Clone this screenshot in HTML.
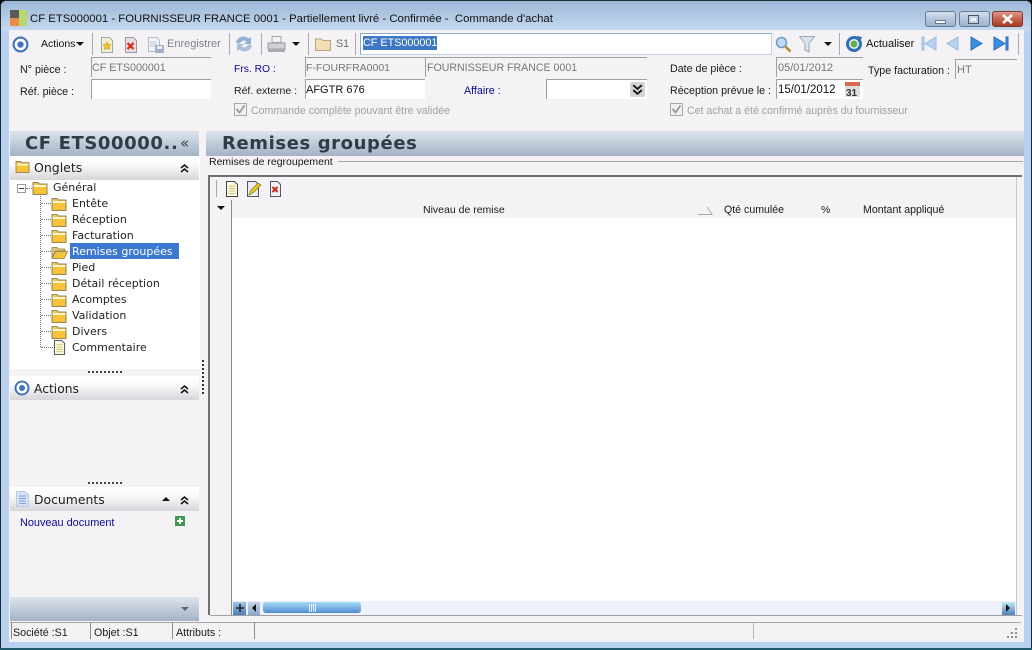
<!DOCTYPE html>
<html><head><meta charset="utf-8"><title>CF ETS000001</title>
<style>
html,body{margin:0;padding:0;width:1032px;height:650px;overflow:hidden;background:#000}
div,svg{position:absolute}
.t{font:10.7px/14px "Liberation Sans",sans-serif;color:#1a1a1a;white-space:nowrap;margin-top:1px}
.g{color:#8c8c8c}.b{color:#0a0a96}
.v{font:12px/14px "Liberation Sans",sans-serif;color:#111;white-space:nowrap;margin-top:1px}
.f{border-top:1px solid #a0a0a0;border-left:1px solid #a0a0a0;box-sizing:border-box;background:#fff;height:20px}
.d{background:#f5f2f6}
.n{font:11px/16px "DejaVu Sans",sans-serif;color:#222;white-space:nowrap;margin-top:1px}
.sep{width:1px;height:22px;background:#a9a9ad;top:33px}
.hp{background:linear-gradient(#fff 0,#fbfbfc 35%,#d6d6da 100%);left:10px;width:189px;height:24px}
.hb{background:linear-gradient(#dce4ee,#a4b2c4)}
.wb{top:11px;width:31px;height:16px;border:1px solid #6a7a90;box-sizing:border-box;border-radius:3px;background:linear-gradient(#d4deea,#b4c5da 50%,#9db2cc)}
</style></head><body>
<svg width="0" height="0" style="left:0;top:0"><defs>
<symbol id="fo" viewBox="0 0 16 14"><path d="M1 1.500h5l1.500 1.500H15v10.500H1z" fill="#e8c45a" stroke="#7a6a3a" stroke-width=".8"/><path d="M1.500 4h13v2H1.500z" fill="#fff6cc"/><path d="M1.500 6h13v7h-13z" fill="#f6c436"/></symbol>
<symbol id="doc" viewBox="0 0 14 16"><path d="M1.500.5h8l3 3v12h-11z" fill="#fdfbe6" stroke="#444" stroke-width="1"/><path d="M3.500 5h7M3.500 7.500h7M3.500 10h7M3.500 12.500h7" stroke="#c7bf74"/></symbol>
<symbol id="up2" viewBox="0 0 9 9"><path d="M1 4l3.500-3L8 4M1 8l3.500-3L8 8" fill="none" stroke="#111" stroke-width="1.500"/></symbol>
<symbol id="tg" viewBox="0 0 16 16"><circle cx="8" cy="8" r="6.500" fill="#fff" stroke="#3f74bd" stroke-width="2"/><circle cx="8" cy="8" r="3" fill="#3f74bd"/></symbol>
</defs></svg>

<!-- window frame -->
<div style="left:0;top:0;width:1032px;height:650px;background:#b9d2ef;border-radius:6px 6px 0 0;border:1px solid #1b2a35;box-sizing:border-box"></div>
<div style="left:1px;top:1px;width:1030px;height:30px;background:linear-gradient(#9db8d6,#c6d9f0);border-radius:5px 5px 0 0"></div>
<div style="left:0;top:648px;width:1032px;height:2px;background:#1f5a6e"></div>
<div style="left:9px;top:30px;width:1015px;height:612px;background:#f5f2f6"></div>

<!-- title -->
<div style="left:10px;top:10px;width:9px;height:8px;background:#5a5a5a"></div>
<div style="left:19px;top:10px;width:8px;height:16px;background:#b3d96b"></div>
<div style="left:10px;top:18px;width:9px;height:8px;background:#ef8a45"></div>
<div class="t" style="left:30px;top:11px;font-size:11.35px;color:#111">CF ETS000001 - FOURNISSEUR FRANCE 0001 - Partiellement livré - Confirmée -&nbsp; Commande d'achat</div>
<!-- window buttons -->
<div class="wb" style="left:925px"></div>
<div style="left:935px;top:20px;width:11px;height:4px;background:#f2f5f9;border:1px solid #6a7890;box-sizing:border-box"></div>
<div class="wb" style="left:959px"></div>
<div style="left:968px;top:15px;width:11px;height:9px;background:#c4d0df;border:1px solid #48566b;box-sizing:border-box"></div>
<div style="left:971px;top:18px;width:5px;height:3px;background:#eef2f7"></div>
<div style="left:992px;top:11px;width:31px;height:16px;border:1px solid #7a3a30;box-sizing:border-box;border-radius:3px;background:linear-gradient(#dd9a8c,#c9614e 50%,#a83a24)"></div>
<svg style="left:1001px;top:14px" width="13" height="10"><path d="M2 1l9 8M11 1l-9 8" stroke="#fff" stroke-width="2.600"/></svg>

<!-- toolbar -->
<svg style="left:12px;top:36px" width="17" height="17"><use href="#tg"/></svg>
<div class="t" style="left:41px;top:36px;color:#111;font-size:10.500px">Actions</div>
<svg style="left:76px;top:42px" width="9" height="5"><path d="M0 0h8L4 4z" fill="#111"/></svg>
<div class="sep" style="left:92px"></div>
<svg style="left:100px;top:37px" width="14" height="16"><path d="M1.500.5h8l3 3v12h-11z" fill="#f5eecc" stroke="#9aa" /><path d="M7 5l1.300 2.600 2.700.3-2 2 .6 2.800L7 11.300 4.400 12.700 5 9.900l-2-2 2.700-.3z" fill="#ecc52c" stroke="#b08a10" stroke-width=".5"/></svg>
<svg style="left:124px;top:37px" width="14" height="16"><path d="M1.500.5h8l3 3v12h-11z" fill="#ecd9dc" stroke="#99a"/><path d="M3.500 6l6 6M9.500 6l-6 6" stroke="#d5261d" stroke-width="2.200"/></svg>
<svg style="left:148px;top:37px" width="17" height="16"><path d="M.5.5h8l3 3v11H.5z" fill="#f2f4f8" stroke="#b4bac4"/><path d="M2 5h7M2 7h7M2 9h7" stroke="#c2c8d4"/><path d="M7 8h9v8H7z" fill="#9fb1c9"/><path d="M9 9h5v3H9z" fill="#e8edf3"/></svg>
<div class="t g" style="left:167px;top:36px;color:#828286;font-size:11px">Enregistrer</div>
<div class="sep" style="left:229px"></div>
<svg style="left:235px;top:35px" width="18" height="18"><path d="M1 8a7.500 7.500 0 0 1 12.500-4.500L16 2v7H9l2.500-2.500A4 4 0 0 0 5 8.500z" fill="#8fb0d6"/><path d="M17 10a7.500 7.500 0 0 1-12.500 4.500L2 16V9h7l-2.500 2.500A4 4 0 0 0 13 9.500z" fill="#a9bfd9"/></svg>
<div class="sep" style="left:261px"></div>
<svg style="left:267px;top:36px" width="19" height="17"><path d="M5 .5h9v6H5z" fill="#f4f4f4" stroke="#a8a8a8"/><path d="M1 7h17v6H1z" fill="#cfd2d6" stroke="#999"/><path d="M1 13h17v3H1z" fill="#a8abaf"/></svg>
<svg style="left:292px;top:42px" width="9" height="5"><path d="M0 0h8L4 4z" fill="#111"/></svg>
<div class="sep" style="left:308px"></div>
<svg style="left:315px;top:37px" width="16" height="14"><path d="M.5 2h6l1.500 1.500h7.500v10H.5z" fill="#f0dfb6" stroke="#b9a77a"/></svg>
<div class="t" style="left:336px;top:36px;color:#6b6b6b">S1</div>
<div class="sep" style="left:355px"></div>
<div style="left:360px;top:33px;width:412px;height:22px;border:1px solid #90a9c4;border-bottom-color:#c5d4e4;border-right-color:#c5d4e4;box-sizing:border-box;background:#fff"></div>
<div style="left:363px;top:36px;width:74px;height:14px;background:#3d78c4"></div>
<div class="t" style="left:363px;top:35px;color:#fff;font-size:10.800px">CF ETS000001</div>
<svg style="left:775px;top:36px" width="17" height="18"><circle cx="6.500" cy="6.500" r="5" fill="#bcdcf5" stroke="#6f9cc4" stroke-width="1.500"/><path d="M10.500 10.500l5 5" stroke="#b8862c" stroke-width="2.500"/></svg>
<svg style="left:799px;top:36px" width="17" height="17"><path d="M.5.500h15L10 7.500v8.500l-4-2V7.500z" fill="#dbe3ec" stroke="#9aa7b6"/></svg>
<svg style="left:824px;top:42px" width="9" height="5"><path d="M0 0h8L4 4z" fill="#111"/></svg>
<div class="sep" style="left:839px"></div>
<svg style="left:845px;top:35px" width="18" height="18"><circle cx="9" cy="9" r="6.500" fill="none" stroke="#2f6fb8" stroke-width="3"/><circle cx="9" cy="9" r="3.500" fill="#62b04a"/><path d="M12 1l5 1-2 5z" fill="#2f6fb8"/></svg>
<div class="t" style="left:866px;top:36px;color:#111;font-size:11px">Actualiser</div>
<svg style="left:921px;top:36px" width="90" height="16"><g fill="#b7d3f1" stroke="#9bbce0"><path d="M1 1h2v13H1zM15 1v13L4 7.500z"/><path d="M37 1v13L26 7.500z"/></g><g fill="#3b8de0" stroke="#2a6fc0"><path d="M50 1v13l11-6.500z"/><path d="M73 1v13l11-6.500zM85 1h2v13h-2z"/></g></svg>
<div class="sep" style="left:1018px"></div>

<!-- form -->
<div class="t" style="left:20px;top:62px">N° pièce :</div>
<div class="f d" style="left:91px;top:57px;width:120px"></div>
<div class="t" style="left:92px;top:60px;color:#777">CF ETS000001</div>
<div class="t" style="left:20px;top:84px">Réf. pièce :</div>
<div class="f" style="left:91px;top:79px;width:120px"></div>

<div class="t b" style="left:234px;top:62px;font-size:10.300px">Frs. RO :</div>
<div class="f d" style="left:305px;top:57px;width:120px"></div>
<div class="t" style="left:306px;top:60px;color:#777;font-size:10.500px">F-FOURFRA0001</div>
<div class="f d" style="left:425px;top:57px;width:222px"></div>
<div class="t" style="left:427px;top:60px;color:#777;font-size:10.600px">FOURNISSEUR FRANCE 0001</div>
<div class="t" style="left:234px;top:83px;font-size:10.500px">Réf. externe :</div>
<div class="f" style="left:305px;top:79px;width:120px"></div>
<div class="v" style="left:306px;top:82px;font-size:11px">AFGTR 676</div>
<div class="t b" style="left:464px;top:83px">Affaire :</div>
<div class="f" style="left:546px;top:79px;width:101px"></div>
<div style="left:630px;top:82px;width:15px;height:15px;background:#d5d5d5;border-radius:2px"></div>
<svg style="left:632px;top:84px" width="11" height="11"><use href="#up2" transform="matrix(1 0 0 -1 0 11)"/></svg>

<svg style="left:234px;top:103px" width="13" height="13"><rect x=".5" y=".5" width="12" height="12" fill="#f0f0f0" stroke="#a8a8a8"/><path d="M2.500 6l3 3.500 5-7" fill="none" stroke="#999" stroke-width="1.800"/></svg>
<div class="t" style="left:251px;top:103px;color:#a0a0a2;font-size:10.600px">Commande complète pouvant être validée</div>

<div class="t" style="left:670px;top:61px">Date de pièce :</div>
<div class="f d" style="left:776px;top:57px;width:87px"></div>
<div class="t" style="left:778px;top:60px;color:#777;font-size:11px">05/01/2012</div>
<div class="t" style="left:670px;top:83px">Réception prévue le :</div>
<div class="f" style="left:776px;top:79px;width:87px"></div>
<div class="v" style="left:778px;top:82px;font-size:11.500px">15/01/2012</div>
<svg style="left:845px;top:82px" width="15" height="15"><rect width="15" height="15" fill="#dedede"/><rect width="15" height="4" fill="#d86a4c"/><text x="1" y="14" font-family="Liberation Sans" font-size="10" font-weight="bold" fill="#333">31</text></svg>
<div class="t" style="left:868px;top:63px">Type facturation :</div>
<div class="f d" style="left:955px;top:59px;width:62px"></div>
<div class="t" style="left:957px;top:62px;color:#777;font-size:11px">HT</div>
<svg style="left:670px;top:103px" width="13" height="13"><rect x=".5" y=".5" width="12" height="12" fill="#f0f0f0" stroke="#a8a8a8"/><path d="M2.500 6l3 3.500 5-7" fill="none" stroke="#999" stroke-width="1.800"/></svg>
<div class="t" style="left:687px;top:103px;color:#a0a0a2;font-size:10.600px">Cet achat a été confirmé auprès du fournisseur</div>

<!-- left header -->
<div class="hb" style="left:10px;top:131px;width:189px;height:25px"></div>
<div style="left:25px;top:132px;font:bold 18px/24px 'DejaVu Sans',sans-serif;color:#2f3b46;white-space:nowrap;letter-spacing:.6px">CF ETS00000..</div>
<div style="left:180px;top:135px;font:15px/16px 'DejaVu Sans',sans-serif;color:#34404c">«</div>
<!-- right header -->
<div class="hb" style="left:206px;top:131px;width:818px;height:25px"></div>
<div style="left:222px;top:132px;font:bold 18px/24px 'DejaVu Sans',sans-serif;color:#2f3b46;white-space:nowrap;letter-spacing:.6px">Remises groupées</div>
<!-- left panel: onglets -->
<div style="left:10px;top:156px;width:190px;height:219px;background:#fff"></div>
<div class="hp" style="top:156px"></div>
<svg style="left:15px;top:160px" width="15" height="13"><use href="#fo"/></svg>
<div class="n" style="left:34px;top:159px;font-size:12.500px">Onglets</div>
<svg style="left:180px;top:164px" width="9" height="9"><use href="#up2"/></svg>
<!-- tree lines -->
<div style="left:40px;top:194px;width:0;height:153px;border-left:1px dotted #777"></div>
<div style="left:17px;top:184px;width:9px;height:9px;border:1px solid #999;box-sizing:border-box;background:#fff"></div>
<div style="left:19px;top:188px;width:5px;height:1px;background:#333"></div>
<div style="left:26px;top:188px;width:6px;border-top:1px dotted #777"></div>
<svg style="left:32px;top:181px" width="16" height="14"><use href="#fo"/></svg>
<div class="n" style="left:53px;top:179px">Général</div>

<div style="left:41px;top:203px;width:10px;border-top:1px dotted #777"></div>
<svg style="left:51px;top:197px" width="16" height="14"><use href="#fo"/></svg>
<div class="n" style="left:72px;top:195px">Entête</div>
<div style="left:41px;top:219px;width:10px;border-top:1px dotted #777"></div>
<svg style="left:51px;top:213px" width="16" height="14"><use href="#fo"/></svg>
<div class="n" style="left:72px;top:211px">Réception</div>
<div style="left:41px;top:235px;width:10px;border-top:1px dotted #777"></div>
<svg style="left:51px;top:229px" width="16" height="14"><use href="#fo"/></svg>
<div class="n" style="left:72px;top:227px">Facturation</div>
<div style="left:41px;top:251px;width:10px;border-top:1px dotted #777"></div>
<svg style="left:51px;top:245px" width="17" height="14"><path d="M1 2.500h5l1.500 1.500H14v2H4.500L1 13z" fill="#e5c878" stroke="#8a7a4a" stroke-width=".8"/><path d="M4.500 6.500h12L13 13.500H1z" fill="#f2c53c" stroke="#8a7a4a" stroke-width=".8"/></svg>
<div style="left:70px;top:243px;width:109px;height:16px;background:#3d78d0"></div>
<div class="n" style="left:72px;top:243px;color:#fff">Remises groupées</div>
<div style="left:41px;top:267px;width:10px;border-top:1px dotted #777"></div>
<svg style="left:51px;top:261px" width="16" height="14"><use href="#fo"/></svg>
<div class="n" style="left:72px;top:259px">Pied</div>
<div style="left:41px;top:283px;width:10px;border-top:1px dotted #777"></div>
<svg style="left:51px;top:277px" width="16" height="14"><use href="#fo"/></svg>
<div class="n" style="left:72px;top:275px">Détail réception</div>
<div style="left:41px;top:299px;width:10px;border-top:1px dotted #777"></div>
<svg style="left:51px;top:293px" width="16" height="14"><use href="#fo"/></svg>
<div class="n" style="left:72px;top:291px">Acomptes</div>
<div style="left:41px;top:315px;width:10px;border-top:1px dotted #777"></div>
<svg style="left:51px;top:309px" width="16" height="14"><use href="#fo"/></svg>
<div class="n" style="left:72px;top:307px">Validation</div>
<div style="left:41px;top:331px;width:10px;border-top:1px dotted #777"></div>
<svg style="left:51px;top:325px" width="16" height="14"><use href="#fo"/></svg>
<div class="n" style="left:72px;top:323px">Divers</div>
<div style="left:41px;top:347px;width:12px;border-top:1px dotted #777"></div>
<svg style="left:53px;top:340px" width="13" height="15"><use href="#doc"/></svg>
<div class="n" style="left:72px;top:339px">Commentaire</div>

<!-- splitter -->
<div style="left:10px;top:369px;width:190px;height:7px;background:#f5f2f6"></div>
<div style="left:88px;top:371px;width:34px;border-top:2px dotted #444"></div>
<div style="left:202px;top:360px;height:34px;border-left:2px dotted #333"></div>
<!-- actions -->
<div class="hp" style="top:376px;height:24px"></div>
<svg style="left:14px;top:380px" width="16" height="16"><use href="#tg"/></svg>
<div class="n" style="left:34px;top:380px;font-size:12.300px">Actions</div>
<svg style="left:180px;top:385px" width="9" height="9"><use href="#up2"/></svg>
<div style="left:88px;top:482px;width:34px;border-top:2px dotted #444"></div>
<!-- documents -->
<div class="hp" style="top:487px;height:24px"></div>
<svg style="left:16px;top:491px" width="13" height="16"><path d="M.5.500h8l4 3v12H.5z" fill="#d4e2f5" stroke="#b9cbe2"/><path d="M3 5h7M3 7.500h7M3 10h7M3 12.500h7" stroke="#7ba0d4"/></svg>
<div class="n" style="left:34px;top:491px;font-size:12.400px">Documents</div>
<svg style="left:162px;top:497px" width="9" height="5"><path d="M0 4h8L4 0z" fill="#111"/></svg>
<svg style="left:180px;top:496px" width="9" height="9"><use href="#up2"/></svg>
<div class="t b" style="left:20px;top:515px;font-size:10.900px">Nouveau document</div>
<svg style="left:175px;top:516px" width="10" height="10"><rect width="10" height="10" fill="#3c9a48"/><path d="M5 2v6M2 5h6" stroke="#fff" stroke-width="2"/></svg>
<div style="left:10px;top:597px;width:189px;height:24px;background:linear-gradient(#dce4ee,#a4b2c4)"></div>
<svg style="left:181px;top:607px" width="9" height="5"><path d="M0 0h8L4 4z" fill="#666"/></svg>

<!-- right: section -->
<div class="t" style="left:209px;top:154px;font-size:10.500px">Remises de regroupement</div>
<div style="left:338px;top:161px;width:685px;height:1px;background:#a6a6a6"></div>
<!-- grid -->
<div style="left:208px;top:175px;width:814px;height:2px;background:#707070"></div>
<div style="left:208px;top:175px;width:2px;height:440px;background:#707070"></div>
<div style="left:210px;top:615px;width:812px;height:1px;background:#a0a0a0"></div>
<div style="left:1016px;top:177px;width:1px;height:438px;background:#c8c8c8"></div>
<div style="left:232px;top:218px;width:784px;height:383px;background:#fff"></div>
<div style="left:231px;top:200px;width:1px;height:415px;background:#8a8a8a"></div>
<div style="left:216px;top:180px;width:1px;height:17px;background:#a9a9ad"></div>
<svg style="left:225px;top:181px" width="14" height="16"><use href="#doc"/></svg>
<svg style="left:246px;top:181px" width="16" height="16"><path d="M1.500.5h8l3 3v12h-11z" fill="#e4edf8" stroke="#556"/><path d="M3 14l2-5 7-7 3 2-7 7z" fill="#e6c81e" stroke="#7a6a10" stroke-width=".6"/></svg>
<svg style="left:269px;top:181px" width="13" height="16"><path d="M1.500.5h7l3 3v12h-10z" fill="#eef2f8" stroke="#556"/><path d="M3.500 6l5 5M8.500 6l-5 5" stroke="#d5261d" stroke-width="2"/></svg>
<svg style="left:217px;top:206px" width="9" height="5"><path d="M0 0h8L4 4z" fill="#111"/></svg>
<div class="t" style="left:423px;top:202px;font-size:10.500px">Niveau de remise</div>
<svg style="left:697px;top:205px" width="16" height="11"><path d="M1 9.500h14L10 2" fill="none" stroke="#aaa"/></svg>
<div class="t" style="left:724px;top:202px;font-size:10.600px">Qté cumulée</div>
<div class="t" style="left:821px;top:202px;font-size:10.500px">%</div>
<div class="t" style="left:863px;top:202px;font-size:10.600px">Montant appliqué</div>
<!-- scrollbar -->
<div style="left:232px;top:601px;width:784px;height:14px;background:#eef2fc"></div>
<div style="left:233px;top:602px;width:13px;height:13px;background:linear-gradient(#9fc0e6,#4f7fb8)"></div>
<svg style="left:236px;top:604px" width="8" height="8"><path d="M4 0v8M0 4h8" stroke="#111" stroke-width="1.300"/></svg>
<div style="left:248px;top:602px;width:12px;height:13px;background:linear-gradient(#c2d4ea,#8aa6c8)"></div>
<svg style="left:252px;top:604px" width="5" height="9"><path d="M4 0v8L0 4z" fill="#111"/></svg>
<div style="left:263px;top:602px;width:98px;height:11px;border-radius:3px;background:linear-gradient(#a6dcf5,#7fb4e2 50%,#4f8ad0)"></div>
<div style="left:309px;top:604px;width:1px;height:8px;background:#e8f2fb;box-shadow:2px 0 #e8f2fb,4px 0 #e8f2fb,6px 0 #e8f2fb"></div>
<div style="left:1002px;top:602px;width:13px;height:13px;background:linear-gradient(#bfeaf8,#4f7fb8)"></div>
<svg style="left:1006px;top:604px" width="5" height="9"><path d="M0 0v8l4-4z" fill="#111"/></svg>
<!-- status bar -->
<div style="left:10px;top:622px;width:1011px;height:1px;background:#a6a6a6"></div>
<div style="left:11px;top:622px;width:1px;height:17px;background:#8a8a8a"></div>
<div style="left:90px;top:622px;width:1px;height:17px;background:#8a8a8a"></div>
<div style="left:172px;top:622px;width:1px;height:17px;background:#8a8a8a"></div>
<div style="left:254px;top:622px;width:1px;height:17px;background:#8a8a8a"></div>
<div style="left:753px;top:622px;width:1px;height:17px;background:#b8b8b8"></div>
<div class="t" style="left:13px;top:625px">Société :S1</div>
<div class="t" style="left:94px;top:625px">Objet :S1</div>
<div class="t" style="left:176px;top:625px">Attributs :</div>
<svg style="left:1007px;top:628px" width="11" height="11"><g fill="#8f8f8f"><rect x="8" y="0" width="2" height="2"/><rect x="4" y="4" width="2" height="2"/><rect x="8" y="4" width="2" height="2"/><rect x="0" y="8" width="2" height="2"/><rect x="4" y="8" width="2" height="2"/><rect x="8" y="8" width="2" height="2"/></g></svg>
</body></html>
